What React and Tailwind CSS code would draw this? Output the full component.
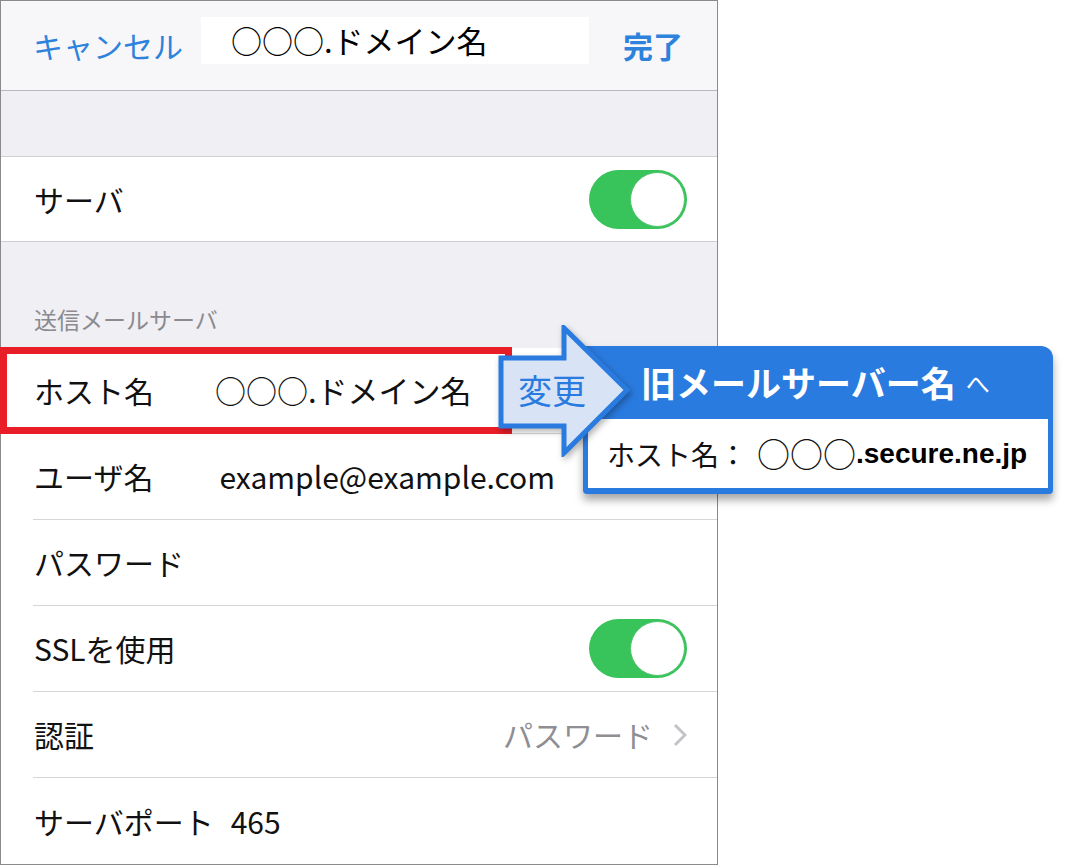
import React from "react";

const font = "font-['Noto_Sans_CJK_JP','Noto_Sans',sans-serif]";

const Toggle = () => (
  <div className="w-[98px] h-[59px] rounded-full bg-[#38c35b] flex items-center justify-end pr-[2px]">
    <div className="w-[55px] h-[55px] rounded-full bg-white border border-[#4cc46a]" />
  </div>
);

const Row = ({ label, value, right, last, valueClass = "ml-[63px]" }) => (
  <div className={`ml-[32px] h-[86px] flex items-center pl-[1px] pr-[30px] ${last ? "" : "border-b border-[#d6d6da]"}`}>
    <span className="text-[30px] text-[#111]">{label}</span>
    {value && <span className={`${valueClass} text-[#111]`}>{value}</span>}
    <div className="ml-auto">{right}</div>
  </div>
);

export default function App() {
  return (
    <div className={`relative w-[1065px] h-[865px] bg-white ${font}`}>
      <div className="w-[718px] h-[865px] border border-[#8a8a8a] bg-white overflow-hidden">
        {/* nav bar */}
        <div className="h-[90px] bg-[#f7f7f9] border-b border-[#b9b9bd] flex items-center pl-[32px] pr-[34px]">
          <span className="text-[30px] text-[#2d82dc]">キャンセル</span>
          <div className="ml-[18px] w-[388px] h-[47px] bg-white flex items-center pl-[30px] mb-[10px]">
            <span className="text-[31px] text-black">○○○.ドメイン名</span>
          </div>
          <span className="ml-auto text-[30px] font-bold text-[#2d82dc]">完了</span>
        </div>

        <div className="h-[66px] bg-[#efeff4] border-b border-[#cfcfd3]" />

        <div className="h-[85px] bg-white border-b border-[#cfcfd3] flex items-center pl-[33px] pr-[30px]">
          <span className="text-[30px] text-[#111]">サーバ</span>
          <div className="ml-auto">
            <Toggle />
          </div>
        </div>

        <div className="h-[106px] bg-[#efeff4] flex items-end pl-[33px] pb-[12px]">
          <span className="text-[23px] text-[#8a8a8f]">送信メールサーバ</span>
        </div>

        <div className="bg-white">
          <Row label="ホスト名" value={<span className="text-[31px]">○○○.ドメイン名</span>} valueClass="ml-[61px]" />
          <Row label="ユーザ名" value={<span className="text-[30px]">example@example.com</span>} valueClass="ml-[66px]" />
          <Row label="パスワード" />
          <Row label="SSLを使用" right={<Toggle />} />
          <Row
            label="認証"
            right={
              <div className="flex items-center gap-[20px]">
                <span className="text-[30px] text-[#8e8e93]">パスワード</span>
                <svg width="14" height="24" viewBox="0 0 14 24" fill="none">
                  <polyline points="2,2 12,12 2,22" stroke="#c4c4c8" strokeWidth="3" />
                </svg>
              </div>
            }
          />
          <Row label="サーバポート" value={<span className="text-[30px]">465</span>} valueClass="ml-[17px]" last />
        </div>
      </div>

      {/* red highlight */}
      <div className="absolute left-0 top-[347px] w-[512px] h-[87px] border-[7px] border-[#e81d27]" />

      {/* callout */}
      <div className="absolute left-[583px] top-[346px] w-[470px] h-[148px] rounded-tr-[12px] rounded-tl-[4px] rounded-b-[4px] bg-[#2a7be0] shadow-[0_6px_8px_rgba(0,0,0,0.35)] flex flex-col">
        <div className="h-[73px] flex items-center pl-[58px]">
          <span className="text-[35px] font-bold text-white">旧メールサーバー名</span>
          <span className="ml-[10px] text-[24px] text-white">へ</span>
        </div>
        <div className="mx-[5px] mb-[6px] flex-1 bg-white flex items-center pl-[19px]">
          <span className="text-[28px] text-[#111]">ホスト名：</span>
          <span className="ml-[10px] text-[33px] text-[#111]">○○○</span>
          <span className="text-[28px] font-bold text-black font-['Liberation_Sans',sans-serif]">.secure.ne.jp</span>
        </div>
      </div>

      {/* arrow */}
      <div className="absolute left-[497px] top-[325px] w-[134px] h-[132px]">
        <svg width="134" height="132" viewBox="0 0 134 132" className="drop-shadow-[2px_3px_3px_rgba(0,0,0,0.3)]">
          <polygon
            points="4,33 67,33 67,3 130,65 67,128 67,101 4,101"
            fill="#d8e3f5"
            stroke="#2a7be0"
            strokeWidth="5"
            strokeLinejoin="miter"
          />
        </svg>
        <span className="absolute left-[21px] top-[41px] text-[34px] leading-[48px] text-[#2a7be0]">変更</span>
      </div>
    </div>
  );
}
